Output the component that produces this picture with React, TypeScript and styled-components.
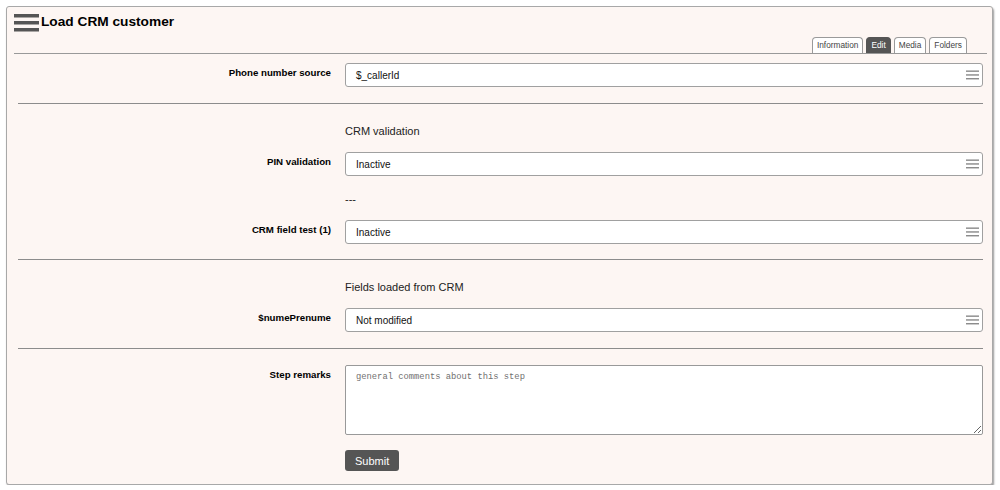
import styled, { createGlobalStyle } from 'styled-components';

const GlobalStyle = createGlobalStyle`
  html, body {
    margin: 0;
    padding: 0;
    background: #fff;
    font-family: "Liberation Sans", Arial, sans-serif;
    color: #000;
  }
`;

const Panel = styled.div`
  box-sizing: border-box;
  width: 987px;
  height: 479px;
  margin: 6px 0 0 6px;
  border: 1px solid #a8a8a8;
  border-radius: 3px;
  background: #fdf6f3;
  box-shadow: 1px 2px 2px #9a9a9a;
  display: flex;
  flex-direction: column;
`;

const Header = styled.div`
  padding: 7px 5px 0 7px;
`;

const TitleRow = styled.div`
  display: flex;
  align-items: center;
  gap: 2px;
  height: 18px;
`;

const Title = styled.h1`
  margin: 0;
  font-size: 13.7px;
  font-weight: bold;
  line-height: 16px;
  position: relative;
  top: -1px;
`;

const TabBar = styled.div`
  display: flex;
  justify-content: flex-end;
  align-items: flex-end;
  gap: 3px;
  margin-top: 5px;
  padding-right: 20px;
  border-bottom: 1px solid #999;
`;

const Tab = styled.div<{ $active?: boolean }>`
  box-sizing: border-box;
  height: 16px;
  padding: 0 4px;
  border: 1px solid ${(p) => (p.$active ? '#555' : '#9a9a9a')};
  border-bottom: none;
  border-radius: 4px 4px 0 0;
  background: ${(p) => (p.$active ? '#555' : '#fff')};
  color: ${(p) => (p.$active ? '#fff' : '#444')};
  font-size: 8.3px;
  line-height: 15px;
`;

const Form = styled.div`
  padding: 0 9px 0 11px;
`;

const Section = styled.div<{ $top: number; $bottom: number; $gap?: number; $last?: boolean }>`
  display: flex;
  flex-direction: column;
  gap: ${(p) => p.$gap ?? 9}px;
  padding: ${(p) => p.$top}px 0 ${(p) => p.$bottom}px;
  border-bottom: ${(p) => (p.$last ? 'none' : '1px solid #8c8c8c')};
`;

const Row = styled.div<{ $shift?: number }>`
  display: grid;
  grid-template-columns: 313px 1fr;
  column-gap: 14px;
  margin-top: ${(p) => p.$shift ?? 0}px;
`;

const Label = styled.div`
  text-align: right;
  font-size: 9.7px;
  font-weight: bold;
  line-height: 12px;
  padding-top: 4px;
`;

const Heading = styled.div`
  font-size: 11px;
  line-height: 24px;
  height: 24px;
  color: #222;
`;

const Select = styled.div`
  box-sizing: border-box;
  height: 24px;
  border: 1px solid #a0a0a0;
  border-radius: 3px;
  background: #fff;
  display: flex;
  align-items: center;
  justify-content: space-between;
  padding: 0 3px 0 10px;
  font-size: 10px;
  color: #111;
`;

const TextArea = styled.textarea`
  box-sizing: border-box;
  width: 100%;
  height: 70px;
  margin: 0;
  border: 1px solid #999;
  border-radius: 2px;
  background: #fff;
  padding: 6px 10px;
  font-family: "Liberation Mono", "Courier New", monospace;
  font-size: 8.8px;
  display: block;

  &::placeholder {
    color: #707070;
  }
`;

const Submit = styled.button`
  box-sizing: border-box;
  height: 21px;
  padding: 0 10px;
  border: none;
  border-radius: 3px;
  background: #555;
  color: #fff;
  font-family: "Liberation Sans", Arial, sans-serif;
  font-size: 11px;
  justify-self: start;
`;

const MenuIcon = () => (
  <svg width="25" height="18" viewBox="0 0 25 18">
    <rect x="0" y="0" width="25" height="3.5" fill="#555" />
    <rect x="0" y="7" width="25" height="3.5" fill="#555" />
    <rect x="0" y="14" width="25" height="3.5" fill="#555" />
  </svg>
);

const ListIcon = () => (
  <svg width="13" height="10" viewBox="0 0 13 10">
    <rect x="0" y="0.5" width="13" height="1.3" fill="#808080" />
    <rect x="0" y="4.3" width="13" height="1.3" fill="#808080" />
    <rect x="0" y="8.1" width="13" height="1.3" fill="#808080" />
  </svg>
);

const Field = ({ label, value }: { label: string; value: string }) => (
  <Row>
    <Label>{label}</Label>
    <Select>
      <span>{value}</span>
      <ListIcon />
    </Select>
  </Row>
);

const App = () => {
  const tabs = ['Information', 'Edit', 'Media', 'Folders'];

  return (
    <>
      <GlobalStyle />
      <Panel>
        <Header>
          <TitleRow>
            <MenuIcon />
            <Title>Load CRM customer</Title>
          </TitleRow>
          <TabBar>
            {tabs.map((t) => (
              <Tab key={t} $active={t === 'Edit'}>
                {t}
              </Tab>
            ))}
          </TabBar>
        </Header>
        <Form>
          <Section $top={9} $bottom={16}>
            <Field label="Phone number source" value="$_callerId" />
          </Section>
          <Section $top={15} $bottom={15}>
            <Row>
              <div />
              <Heading>CRM validation</Heading>
            </Row>
            <Field label="PIN validation" value="Inactive" />
            <Row $shift={2}>
              <div />
              <Heading>---</Heading>
            </Row>
            <Field label="CRM field test (1)" value="Inactive" />
          </Section>
          <Section $top={15} $bottom={16}>
            <Row>
              <div />
              <Heading>Fields loaded from CRM</Heading>
            </Row>
            <Field label="$numePrenume" value="Not modified" />
          </Section>
          <Section $top={16} $bottom={0} $gap={15} $last>
            <Row>
              <Label>Step remarks</Label>
              <TextArea placeholder="general comments about this step" />
            </Row>
            <Row>
              <div />
              <Submit>Submit</Submit>
            </Row>
          </Section>
        </Form>
      </Panel>
    </>
  );
};

export default App;
